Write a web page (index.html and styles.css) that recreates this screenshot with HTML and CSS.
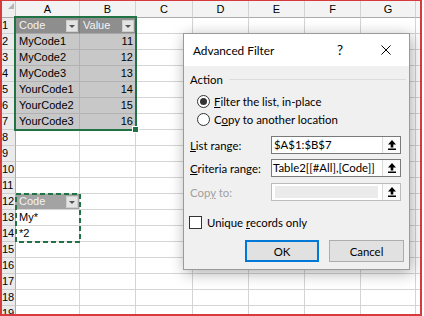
FILE: index.html
```html
<!DOCTYPE html>
<html>
<head>
<meta charset="utf-8">
<link rel="stylesheet" href="styles.css">
</head>
<body>
<div class="frame">
  <div class="sheet">
    <div class="corner"><i class="tri"></i></div>
    <div class="ch">A</div><div class="ch">B</div><div class="ch">C</div><div class="ch">D</div><div class="ch">E</div><div class="ch">F</div><div class="ch">G</div><div class="ch end"></div>

    <div class="rh">1</div><div class="c th"><span>Code</span><i class="fb"></i></div><div class="c th"><span>Value</span><i class="fb"></i></div><div class="c"></div><div class="c"></div><div class="c"></div><div class="c"></div><div class="c"></div><div class="c end"></div>
    <div class="rh">2</div><div class="c sd">MyCode1</div><div class="c sd num">11</div><div class="c"></div><div class="c"></div><div class="c"></div><div class="c"></div><div class="c"></div><div class="c end"></div>
    <div class="rh">3</div><div class="c sd">MyCode2</div><div class="c sd num">12</div><div class="c"></div><div class="c"></div><div class="c"></div><div class="c"></div><div class="c"></div><div class="c end"></div>
    <div class="rh">4</div><div class="c sd">MyCode3</div><div class="c sd num">13</div><div class="c"></div><div class="c"></div><div class="c"></div><div class="c"></div><div class="c"></div><div class="c end"></div>
    <div class="rh">5</div><div class="c sd">YourCode1</div><div class="c sd num">14</div><div class="c"></div><div class="c"></div><div class="c"></div><div class="c"></div><div class="c"></div><div class="c end"></div>
    <div class="rh">6</div><div class="c sd">YourCode2</div><div class="c sd num">15</div><div class="c"></div><div class="c"></div><div class="c"></div><div class="c"></div><div class="c"></div><div class="c end"></div>
    <div class="rh">7</div><div class="c sd">YourCode3</div><div class="c sd num">16</div><div class="c"></div><div class="c"></div><div class="c"></div><div class="c"></div><div class="c"></div><div class="c end"></div>
    <div class="rh">8</div><div class="c"></div><div class="c"></div><div class="c"></div><div class="c"></div><div class="c"></div><div class="c"></div><div class="c"></div><div class="c end"></div>
    <div class="rh">9</div><div class="c"></div><div class="c"></div><div class="c"></div><div class="c"></div><div class="c"></div><div class="c"></div><div class="c"></div><div class="c end"></div>
    <div class="rh">10</div><div class="c"></div><div class="c"></div><div class="c"></div><div class="c"></div><div class="c"></div><div class="c"></div><div class="c"></div><div class="c end"></div>
    <div class="rh">11</div><div class="c"></div><div class="c"></div><div class="c"></div><div class="c"></div><div class="c"></div><div class="c"></div><div class="c"></div><div class="c end"></div>
    <div class="rh">12</div><div class="c th2"><span>Code</span><i class="fb"></i></div><div class="c"></div><div class="c"></div><div class="c"></div><div class="c"></div><div class="c"></div><div class="c"></div><div class="c end"></div>
    <div class="rh">13</div><div class="c">My*</div><div class="c"></div><div class="c"></div><div class="c"></div><div class="c"></div><div class="c"></div><div class="c"></div><div class="c end"></div>
    <div class="rh">14</div><div class="c">*2</div><div class="c"></div><div class="c"></div><div class="c"></div><div class="c"></div><div class="c"></div><div class="c"></div><div class="c end"></div>
    <div class="rh">15</div><div class="c"></div><div class="c"></div><div class="c"></div><div class="c"></div><div class="c"></div><div class="c"></div><div class="c"></div><div class="c end"></div>
    <div class="rh">16</div><div class="c"></div><div class="c"></div><div class="c"></div><div class="c"></div><div class="c"></div><div class="c"></div><div class="c"></div><div class="c end"></div>
    <div class="rh">17</div><div class="c"></div><div class="c"></div><div class="c"></div><div class="c"></div><div class="c"></div><div class="c"></div><div class="c"></div><div class="c end"></div>
    <div class="rh">18</div><div class="c"></div><div class="c"></div><div class="c"></div><div class="c"></div><div class="c"></div><div class="c"></div><div class="c"></div><div class="c end"></div>
    <div class="rh">19</div><div class="c"></div><div class="c"></div><div class="c"></div><div class="c"></div><div class="c"></div><div class="c"></div><div class="c"></div><div class="c end"></div>
  </div>

  <div class="sel"><i class="handle"></i></div>
  <svg class="ants" width="66" height="50" viewBox="0 0 66 50"><rect x="1" y="1" width="64" height="48" fill="none" stroke="#217346" stroke-width="2" stroke-dasharray="5 3"/></svg>

  <div class="dialog">
    <div class="titlebar">
      <span class="title">Advanced Filter</span>
      <span class="tbtn help">?</span>
      <span class="tbtn close"><svg width="10" height="10" viewBox="0 0 10 10"><path d="M0.5 0.5L9.5 9.5M9.5 0.5L0.5 9.5" stroke="#000" stroke-width="1" fill="none"/></svg></span>
    </div>
    <div class="body">
      <div class="grp"><span>Action</span><i class="gline"></i></div>
      <div class="radio on"><span class="rb"></span><span><u>F</u>ilter the list, in-place</span></div>
      <div class="radio"><span class="rb"></span><span>C<u>o</u>py to another location</span></div>
      <div class="field f1">
        <span class="lbl"><u>L</u>ist range:</span>
        <div class="ref"><span class="val">$A$1:$B$7</span><span class="rbtn"><svg width="8" height="10" viewBox="0 0 8 10"><path d="M4 0L8 4.5H5.3V7.5H2.7V4.5H0Z" fill="#000"/><rect x="0" y="8.5" width="8" height="1.5" fill="#000"/></svg></span></div>
      </div>
      <div class="field f2">
        <span class="lbl"><u>C</u>riteria range:</span>
        <div class="ref"><span class="val crit">Table2[[#All],[Code]]</span><span class="rbtn"><svg width="8" height="10" viewBox="0 0 8 10"><path d="M4 0L8 4.5H5.3V7.5H2.7V4.5H0Z" fill="#000"/><rect x="0" y="8.5" width="8" height="1.5" fill="#000"/></svg></span></div>
      </div>
      <div class="field f3 dis">
        <span class="lbl">Cop<u>y</u> to:</span>
        <div class="ref"><span class="val"></span><span class="rbtn"><svg width="8" height="10" viewBox="0 0 8 10"><path d="M4 0L8 4.5H5.3V7.5H2.7V4.5H0Z" fill="#000"/><rect x="0" y="8.5" width="8" height="1.5" fill="#000"/></svg></span></div>
      </div>
      <div class="check"><span class="cb"></span><span>Unique <u>r</u>ecords only</span></div>
      <div class="buttons">
        <span class="btn ok">OK</span>
        <span class="btn cancel">Cancel</span>
      </div>
    </div>
  </div>
</div>
</body>
</html>
```
FILE: styles.css
```css
* { box-sizing: border-box; }
html, body { margin: 0; padding: 0; background: #fff; }
body { width: 424px; height: 316px; overflow: hidden; font-family: "Liberation Sans", Arial, sans-serif; }

.frame {
  position: relative;
  width: 422px;
  height: 316px;
  border: 2px solid #d63a3c;
  border-top-width: 1px;
  overflow: hidden;
}

.sheet {
  display: grid;
  grid-template-columns: 14px 64px 56px 57px 56px 56px 56px 55px 1fr;
  grid-template-rows: 17px repeat(19, 16px);
}
.sheet > div {
  border-right: 1px solid #d4d4d4;
  border-bottom: 1px solid #d4d4d4;
  font-size: 11px;
  line-height: 15px;
  color: #000;
  white-space: nowrap;
  overflow: hidden;
}
.corner {
  position: relative;
  background: #efefef;
  border-right-color: #c6c6c6 !important;
  border-bottom-color: #ababab !important;
}
.tri {
  position: absolute;
  right: 1px;
  top: 2px;
  width: 0; height: 0;
  border-left: 6px solid transparent;
  border-bottom: 6px solid #b4b4b4;
}
.ch {
  background: #f3f3f3;
  color: #444;
  text-align: center;
  line-height: 16px !important;
  border-right-color: #d2d2d2 !important;
  border-bottom-color: #ababab !important;
}
.rh {
  background: #ebebeb;
  color: #333;
  padding-left: 0;
  border-right-color: #ababab !important;
  border-bottom-color: #cfcfcf !important;
}
.c { padding: 0 2px 0 3px; }
.end { border-right: none !important; }

.th, .th2 {
  display: flex;
  align-items: center;
  justify-content: space-between;
  padding-right: 1px !important;
  color: #f4f4f4 !important;
}
.th { background: #8e8e8e; border-right-color: #7e7e7e !important; border-bottom-color: #a8a8a8 !important; }
.th2 { background: #a3a3a3; }
.fb {
  position: relative;
  width: 12px;
  height: 12px;
  background: #e4e4e4;
  border: 1px solid #cfcfcf;
}
.fb::after {
  content: "";
  position: absolute;
  left: 2px;
  top: 4px;
  border-left: 3px solid transparent;
  border-right: 3px solid transparent;
  border-top: 3px solid #555;
}
.sd { background: #c8c8c8; border-bottom-color: #b2b2b2 !important; border-right-color: #b2b2b2 !important; }
.num { text-align: right; }

.sel {
  position: absolute;
  left: 12px;
  top: 15px;
  width: 123px;
  height: 115px;
  border: 2px solid #217346;
}
.handle {
  position: absolute;
  right: -4px;
  bottom: -4px;
  width: 7px;
  height: 7px;
  background: #217346;
  border: 1px solid #fff;
}
.ants { position: absolute; left: 13px; top: 192px; }

/* dialog */
.dialog {
  position: absolute;
  left: 181px;
  top: 32px;
  width: 227px;
  height: 237px;
  border: 1px solid #9a9a9a;
  background: #f0f0f0;
  box-shadow: 2px 3px 14px rgba(0, 0, 0, 0.32);
  font-family: Lato, "Open Sans", sans-serif;
  font-size: 11.4px;
  color: #000;
  display: flex;
  flex-direction: column;
}
.titlebar {
  height: 32px;
  background: #fff;
  display: flex;
  align-items: center;
  padding-left: 9px;
}
.title { flex: 1; font-size: 11.8px; }
.tbtn {
  width: 46px;
  height: 32px;
  display: flex;
  align-items: center;
  justify-content: center;
}
.help { font-size: 13.5px; }

.body {
  flex: 1;
  padding: 5px 5px 6px 6px;
  display: flex;
  flex-direction: column;
}
.grp {
  height: 16px;
  display: flex;
  align-items: center;
  gap: 6px;
  margin-right: -2px;
}
.gline { flex: 1; height: 1px; background: #dcdcdc; }

.radio {
  height: 18px;
  display: flex;
  align-items: center;
  padding-left: 7px;
  gap: 4px;
}
.rb {
  position: relative;
  width: 13px;
  height: 13px;
  border: 1px solid #333;
  border-radius: 50%;
  background: #fff;
}
.radio.on .rb::after {
  content: "";
  position: absolute;
  left: 2px; top: 2px;
  width: 7px; height: 7px;
  border-radius: 50%;
  background: #333;
}
.grp + .radio { margin-top: 5px; }

.field {
  display: flex;
  align-items: center;
  height: 18px;
}
.f1 { margin-top: 8px; }
.f2 { margin-top: 5px; }
.f3 { margin-top: 6px; }
.lbl { width: 81px; }
.ref {
  width: 130px;
  height: 18px;
  border: 1px solid #7a7a7a;
  background: #fff;
  display: flex;
}
.val { flex: 1; padding-left: 2px; line-height: 16px; white-space: nowrap; overflow: hidden; }
.crit { padding-left: 1px; }
.rbtn {
  width: 18px;
  display: flex;
  align-items: center;
  justify-content: center;
  background: #fbfbfb;
  border-left: 1px solid #d9d9d9;
}
.dis .lbl { color: #a0a0a0; }
.dis .ref { border-color: #bcbcbc; }
.dis .val { margin: 2px 4px 2px 3px; background: #ebebeb; }

.check {
  margin-top: 13px;
  height: 16px;
  display: flex;
  align-items: center;
  gap: 5px;
  margin-left: -1px;
}
.cb {
  width: 13px;
  height: 13px;
  border: 1px solid #333;
  background: #fff;
}

.buttons {
  margin-top: 10px;
  display: flex;
  justify-content: flex-end;
  gap: 10px;
}
.btn {
  height: 22px;
  display: flex;
  align-items: center;
  justify-content: center;
  background: #e1e1e1;
}
.ok { width: 74px; border: 2px solid #0078d7; }
.cancel { width: 75px; border: 1px solid #adadad; }
```
